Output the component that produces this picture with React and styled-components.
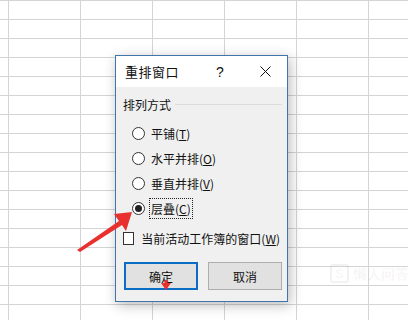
import styled, { createGlobalStyle } from 'styled-components';

const GlobalStyle = createGlobalStyle`
  html, body {
    margin: 0;
    padding: 0;
    overflow: hidden;
  }
  body {
    font-family: "Noto Sans CJK SC", "Noto Sans", sans-serif;
  }
`;

const Sheet = styled.div`
  position: relative;
  width: 408px;
  height: 320px;
  overflow: hidden;
  background-color: #fff;
  background-image: linear-gradient(to right, #d4d4d4 1px, transparent 1px),
    linear-gradient(to bottom, #d4d4d4 1px, transparent 1px);
  background-size: 72px 19px;
  background-position: 8px 0;
`;

const Dialog = styled.div`
  position: absolute;
  left: 115px;
  top: 55px;
  width: 171px;
  height: 245px;
  border: 1px solid #3f74ad;
  background: #f0f0f0;
  box-shadow: 2px 3px 12px rgba(0, 0, 0, 0.28);
  display: flex;
  flex-direction: column;
  color: #111;
  font-size: 12px;
`;

const TitleBar = styled.div`
  height: 31px;
  background: #fff;
  display: flex;
  align-items: center;
  padding-left: 9px;
  font-size: 13px;
`;

const Title = styled.span`
  flex: 1;
  letter-spacing: 0.5px;
`;

const TitleButton = styled.span`
  width: ${(p) => p.$w}px;
  display: flex;
  justify-content: center;
  align-items: center;
  font-family: "Liberation Sans", sans-serif;
  font-size: 14px;
`;

const Body = styled.div`
  flex: 1;
  padding: 9px 5px 0 7px;
  display: flex;
  flex-direction: column;
`;

const GroupHeader = styled.div`
  display: flex;
  align-items: center;
  gap: 4px;
  height: 16px;
  &::after {
    content: '';
    flex: 1;
    height: 1px;
    background: #dcdcdc;
  }
`;

const RadioList = styled.div`
  display: flex;
  flex-direction: column;
  padding-left: 9px;
  margin-top: 9px;
`;

const Row = styled.label`
  display: flex;
  align-items: center;
  height: ${(p) => p.$h || 25}px;
  gap: 4px;
`;

const Radio = styled.span`
  width: 11px;
  height: 11px;
  border: 1px solid #333;
  border-radius: 50%;
  background: #fff;
  display: flex;
  justify-content: center;
  align-items: center;
  &::after {
    content: '';
    display: ${(p) => (p.$checked ? 'block' : 'none')};
    width: 7px;
    height: 7px;
    border-radius: 50%;
    background: #222;
  }
`;

const Label = styled.span`
  padding: 1px 1px;
  border: 1px dotted ${(p) => (p.$focus ? '#222' : 'transparent')};
  white-space: nowrap;
  u {
    text-decoration: underline;
    text-underline-offset: 1px;
  }
`;

const CheckRow = styled(Row)`
  margin-top: 5px;
  gap: 5px;
`;

const Checkbox = styled.span`
  width: 11px;
  height: 11px;
  border: 1px solid #333;
  background: #fff;
`;

const Buttons = styled.div`
  display: flex;
  gap: 10px;
  margin-top: 11px;
  padding-left: 1px;
`;

const Button = styled.div`
  position: relative;
  box-sizing: border-box;
  width: 74px;
  height: 28px;
  background: #e1e1e1;
  border: ${(p) => (p.$primary ? '2px solid #0a6cc4' : '1px solid #adadad')};
  display: flex;
  justify-content: center;
  align-items: center;
  font-size: 12px;
`;

const PointerMark = styled.svg`
  position: absolute;
  left: 35px;
  top: 16px;
`;

const Arrow = styled.svg`
  position: absolute;
  left: 74px;
  top: 204px;
`;

const Watermark = styled.div`
  position: absolute;
  left: 330px;
  top: 263px;
  display: flex;
  align-items: center;
  gap: 4px;
  white-space: nowrap;
  color: rgba(0, 0, 0, 0.05);
  font-size: 14px;
  font-weight: bold;
`;

const WatermarkLogo = styled.span`
  width: 15px;
  height: 15px;
  border: 2px solid rgba(0, 0, 0, 0.05);
  border-radius: 3px;
  display: flex;
  justify-content: center;
  align-items: center;
  font-family: "Liberation Sans", sans-serif;
  font-size: 13px;
`;

const options = [
  { text: '平铺', key: 'T' },
  { text: '水平并排', key: 'O' },
  { text: '垂直并排', key: 'V' },
  { text: '层叠', key: 'C', checked: true },
];

export default function App() {
  return (
    <Sheet>
      <GlobalStyle />
      <Dialog>
        <TitleBar>
          <Title>重排窗口</Title>
          <TitleButton $w={46}>?</TitleButton>
          <TitleButton $w={44}>
            <svg width="11" height="11" viewBox="0 0 11 11">
              <path d="M0.5 0.5 L10.5 10.5 M10.5 0.5 L0.5 10.5" stroke="#111" strokeWidth="1" />
            </svg>
          </TitleButton>
        </TitleBar>
        <Body>
          <GroupHeader>排列方式</GroupHeader>
          <RadioList>
            {options.map((o) => (
              <Row key={o.key}>
                <Radio $checked={o.checked} />
                <Label $focus={o.checked}>
                  {o.text}(<u>{o.key}</u>)
                </Label>
              </Row>
            ))}
          </RadioList>
          <CheckRow>
            <Checkbox />
            <Label>
              当前活动工作簿的窗口(<u>W</u>)
            </Label>
          </CheckRow>
          <Buttons>
            <Button $primary>
              确定
              <PointerMark width="10" height="10" viewBox="0 0 10 10">
                <path d="M3.5 0 H6.5 V3 H10 L5 10 L0 3 H3.5 Z" fill="#e8312f" />
              </PointerMark>
            </Button>
            <Button>取消</Button>
          </Buttons>
        </Body>
      </Dialog>
      <Arrow width="60" height="50" viewBox="0 0 60 50">
        <path d="M3 46 L45 17 L40 10 L58 8 L52 27 L48 21 L6 48 Z" fill="#e8312f" />
      </Arrow>
      <Watermark>
        <WatermarkLogo>S</WatermarkLogo>
        懒人问答
      </Watermark>
    </Sheet>
  );
}
